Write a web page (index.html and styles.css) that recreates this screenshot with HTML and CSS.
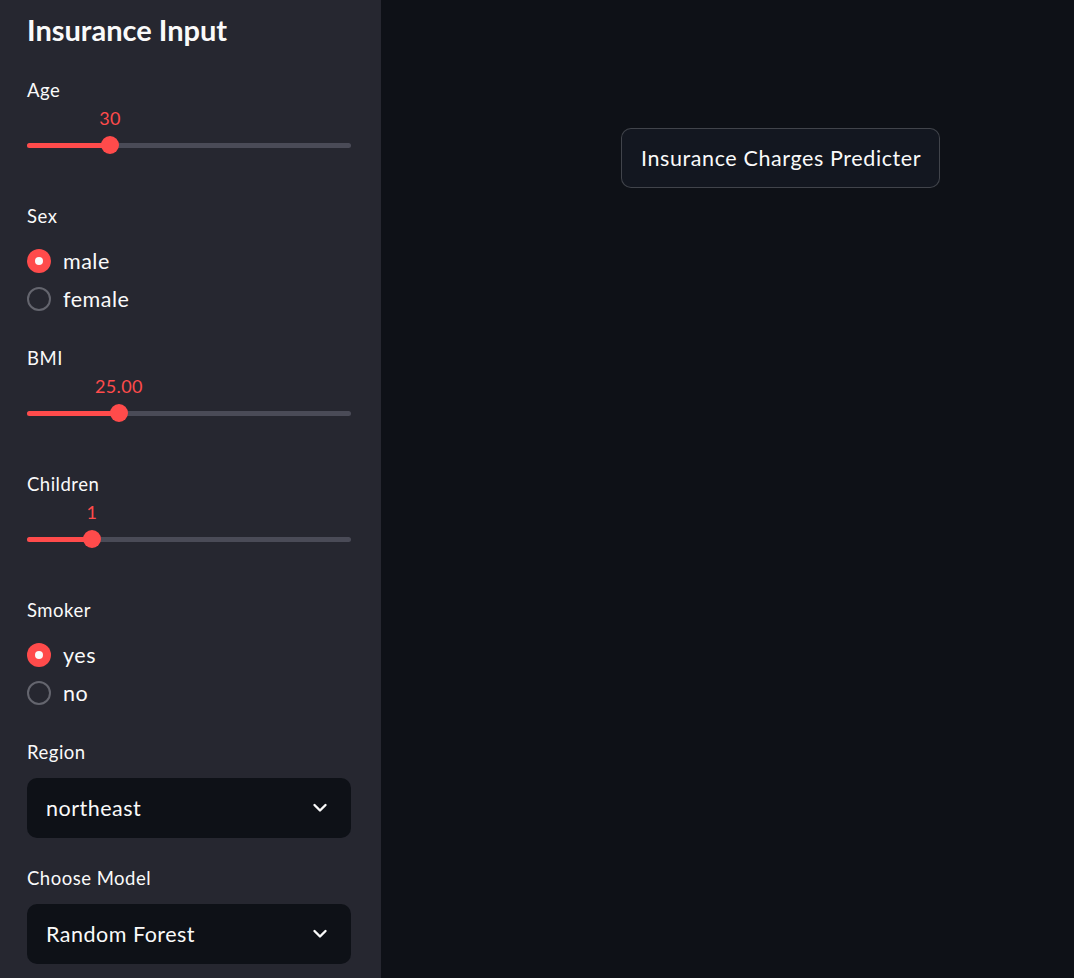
FILE: index.html
```html
<!DOCTYPE html>
<html>
<head>
<meta charset="utf-8">
<link rel="stylesheet" href="styles.css">
</head>
<body>
<div class="app">
  <aside class="sidebar">
    <h2 class="title">Insurance Input</h2>

    <div class="widget slider-widget">
      <div class="label">Age</div>
      <div class="slider">
        <div class="value-row"><span class="value" style="left: 24.2%">30</span></div>
        <div class="track-wrap">
          <div class="track">
            <div class="fill" style="width: calc(24.2% * 0.944 + 9px)"></div>
            <div class="thumb" style="left: calc(24.2% * 0.944)"></div>
          </div>
        </div>
      </div>
    </div>

    <div class="widget radio-widget">
      <div class="label">Sex</div>
      <div class="radios">
        <div class="radio"><span class="dot on"></span><span>male</span></div>
        <div class="radio"><span class="dot"></span><span>female</span></div>
      </div>
    </div>

    <div class="widget slider-widget">
      <div class="label">BMI</div>
      <div class="slider">
        <div class="value-row"><span class="value" style="left: 27.1%">25.00</span></div>
        <div class="track-wrap">
          <div class="track">
            <div class="fill" style="width: calc(27.1% * 0.944 + 9px)"></div>
            <div class="thumb" style="left: calc(27.1% * 0.944)"></div>
          </div>
        </div>
      </div>
    </div>

    <div class="widget slider-widget">
      <div class="label">Children</div>
      <div class="slider">
        <div class="value-row"><span class="value" style="left: 18.3%">1</span></div>
        <div class="track-wrap">
          <div class="track">
            <div class="fill" style="width: calc(18.3% * 0.944 + 9px)"></div>
            <div class="thumb" style="left: calc(18.3% * 0.944)"></div>
          </div>
        </div>
      </div>
    </div>

    <div class="widget radio-widget">
      <div class="label">Smoker</div>
      <div class="radios">
        <div class="radio"><span class="dot on"></span><span>yes</span></div>
        <div class="radio"><span class="dot"></span><span>no</span></div>
      </div>
    </div>

    <div class="widget select-widget">
      <div class="label">Region</div>
      <div class="select">
        <span>northeast</span>
        <svg class="chev" width="16" height="16" viewBox="0 0 16 16"><path d="M2.5 5 L8 10.5 L13.5 5" fill="none" stroke="#fafafa" stroke-width="2.4" stroke-linecap="round" stroke-linejoin="round"/></svg>
      </div>
    </div>

    <div class="widget select-widget">
      <div class="label">Choose Model</div>
      <div class="select">
        <span>Random Forest</span>
        <svg class="chev" width="16" height="16" viewBox="0 0 16 16"><path d="M2.5 5 L8 10.5 L13.5 5" fill="none" stroke="#fafafa" stroke-width="2.4" stroke-linecap="round" stroke-linejoin="round"/></svg>
      </div>
    </div>
  </aside>

  <main class="main">
    <button class="btn">Insurance Charges Predicter</button>
  </main>
</div>
</body>
</html>
```

FILE: styles.css
```css
* { box-sizing: border-box; }
html, body {
  margin: 0;
  padding: 0;
  background: #0e1117;
  color: #fafafa;
  font-family: "Lato", "Liberation Sans", sans-serif;
}
.app {
  display: flex;
  width: 1074px;
  height: 978px;
  overflow: hidden;
}
.sidebar {
  width: 381px;
  flex: none;
  background: #262730;
  padding: 10px 30px 0 27px;
  display: flex;
  flex-direction: column;
}
.title {
  margin: 0;
  font-size: 29px;
  font-weight: 700;
  line-height: 40px;
  height: 40px;
  color: #fafafa;
}
.label {
  font-size: 18.5px;
  letter-spacing: 0.5px;
  line-height: 22px;
  height: 22px;
  color: #fafafa;
}
.title + .widget { margin-top: 29px; }
.slider-widget + .widget { margin-top: 44px; }
.radio-widget + .widget { margin-top: 29px; }
.select-widget + .widget { margin-top: 29px; }

.slider { margin-top: 6px; }
.value-row {
  position: relative;
  height: 22px;
  margin: 0 9px;
}
.value {
  position: absolute;
  top: 0;
  transform: translateX(-50%);
  color: #ff4b4b;
  font-size: 18px;
  letter-spacing: 0.4px;
  line-height: 22px;
  white-space: nowrap;
}
.track-wrap {
  height: 32px;
  display: flex;
  align-items: center;
}
.track {
  position: relative;
  width: 100%;
  height: 5px;
  border-radius: 3px;
  background: #4a4b57;
}
.fill {
  position: absolute;
  left: 0;
  top: 0;
  height: 5px;
  border-radius: 3px;
  background: #ff4b4b;
}
.thumb {
  position: absolute;
  top: -6.5px;
  width: 18px;
  height: 18px;
  border-radius: 50%;
  background: #ff4b4b;
}

.radios {
  margin-top: 15px;
  display: flex;
  flex-direction: column;
}
.radio {
  height: 38px;
  display: flex;
  align-items: center;
  gap: 12px;
  font-size: 21.5px;
  letter-spacing: 0.5px;
}
.dot {
  width: 24px;
  height: 24px;
  border-radius: 50%;
  border: 2px solid #64656e;
  background: transparent;
  display: flex;
  align-items: center;
  justify-content: center;
  flex: none;
}
.dot.on {
  border: none;
  background: #ff4b4b;
}
.dot.on::after {
  content: "";
  width: 8px;
  height: 8px;
  border-radius: 50%;
  background: #fafafa;
}

.select {
  margin-top: 15px;
  height: 60px;
  border-radius: 10px;
  background: #0e1117;
  display: flex;
  align-items: center;
  justify-content: space-between;
  padding: 0 23px 0 19px;
  font-size: 21.5px;
  letter-spacing: 0.5px;
}
.chev { flex: none; }

.main {
  flex: 1;
  padding: 128px 0 0 240px;
}
.btn {
  height: 60px;
  padding: 0 18px 0 19px;
  border-radius: 10px;
  border: 1px solid rgba(250, 250, 250, 0.2);
  background: #131720;
  color: #fafafa;
  font-family: "Lato", "Liberation Sans", sans-serif;
  font-size: 21.5px;
  letter-spacing: 0.6px;
  cursor: pointer;
}
```
